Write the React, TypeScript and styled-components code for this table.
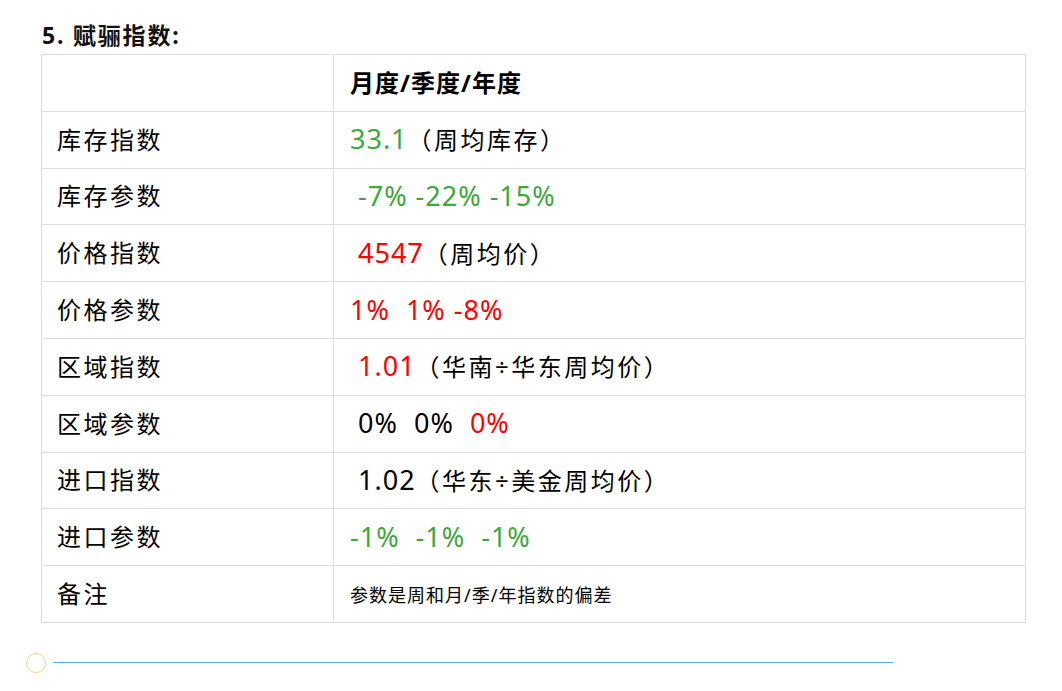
import React from "react";
import styled, { createGlobalStyle } from "styled-components";

const GlobalStyle = createGlobalStyle`
  html, body {
    margin: 0;
    padding: 0;
    background: #ffffff;
  }
  body {
    font-family: "Noto Sans", "Noto Sans CJK SC", sans-serif;
    color: #000000;
  }
`;

const GREEN = "#3ba93b";
const RED = "#ff0000";

const Page = styled.div`
  padding: 19px 0 0 26px;
  width: 1062px;
  box-sizing: border-box;
`;

const Section = styled.section`
  margin-left: 15px;
`;

const Title = styled.h2`
  margin: 0 0 2px 1px;
  font-size: 23px;
  line-height: 33px;
  font-weight: 700;
  letter-spacing: 1.8px;
  color: #111;
`;

const Table = styled.table`
  border-collapse: collapse;
  width: 985px;
  table-layout: fixed;
`;

const Col = styled.col<{ $w?: number }>`
  width: ${(p) => (p.$w ? `${p.$w}px` : "auto")};
`;

const Row = styled.tr`
  height: 56.8px;
`;

const Cell = styled.td<{ $first?: boolean }>`
  border: 1px solid #dddddd;
  padding: 0 0 0 ${(p) => (p.$first ? "15px" : "16px")};
  font-size: 24px;
  letter-spacing: 2.5px;
  line-height: 32px;
  white-space: pre;
  vertical-align: middle;
`;

const HeadCell = styled(Cell)`
  font-weight: 700;
  letter-spacing: 1px;
`;

const Num = styled.span<{ $color?: string }>`
  color: ${(p) => p.$color || "#000"};
  font-size: 27px;
  letter-spacing: 1px;
`;

const Text = styled.span`
  color: #000;
`;

const Note = styled.span`
  font-size: 18px;
  letter-spacing: 1px;
`;

const Footer = styled.div`
  display: flex;
  align-items: center;
  margin-top: 30px;
`;

const Dot = styled.span`
  width: 18px;
  height: 18px;
  border: 1px solid #ffd27f;
  border-radius: 50%;
  flex: none;
`;

const Rule = styled.span`
  margin-left: 7px;
  width: 840px;
  height: 1px;
  background: #5aa5f5;
  flex: none;
`;

type PartT = { t: string; c?: string; num?: boolean };
type RowT = { label: string; parts?: PartT[]; note?: string };

const rows: RowT[] = [
  { label: "库存指数", parts: [{ t: "33.1", c: GREEN, num: true }, { t: "（周均库存）" }] },
  { label: "库存参数", parts: [{ t: " -7% -22% -15%", c: GREEN, num: true }] },
  { label: "价格指数", parts: [{ t: " 4547", c: RED, num: true }, { t: "（周均价）" }] },
  { label: "价格参数", parts: [{ t: "1%  1% -8%", c: RED, num: true }] },
  { label: "区域指数", parts: [{ t: " 1.01", c: RED, num: true }, { t: "（华南÷华东周均价）" }] },
  { label: "区域参数", parts: [{ t: " 0%  0%  ", num: true }, { t: "0%", c: RED, num: true }] },
  { label: "进口指数", parts: [{ t: " 1.02", num: true }, { t: "（华东÷美金周均价）" }] },
  { label: "进口参数", parts: [{ t: "-1%  -1%  -1%", c: GREEN, num: true }] },
  { label: "备注", note: "参数是周和月/季/年指数的偏差" },
];

export default function App() {
  return (
    <>
      <GlobalStyle />
      <Page>
        <Section>
          <Title>5. 赋骊指数:</Title>
          <Table>
            <colgroup>
              <Col $w={292} />
              <Col />
            </colgroup>
            <tbody>
              <Row>
                <Cell $first />
                <HeadCell>月度/季度/年度</HeadCell>
              </Row>
              {rows.map((r) => (
                <Row key={r.label}>
                  <Cell $first>{r.label}</Cell>
                  <Cell>
                    {r.parts?.map((p, i) =>
                      p.num ? (
                        <Num key={i} $color={p.c}>
                          {p.t}
                        </Num>
                      ) : (
                        <Text key={i}>{p.t}</Text>
                      )
                    )}
                    {r.note && <Note>{r.note}</Note>}
                  </Cell>
                </Row>
              ))}
            </tbody>
          </Table>
        </Section>
        <Footer>
          <Dot />
          <Rule />
        </Footer>
      </Page>
    </>
  );
}
